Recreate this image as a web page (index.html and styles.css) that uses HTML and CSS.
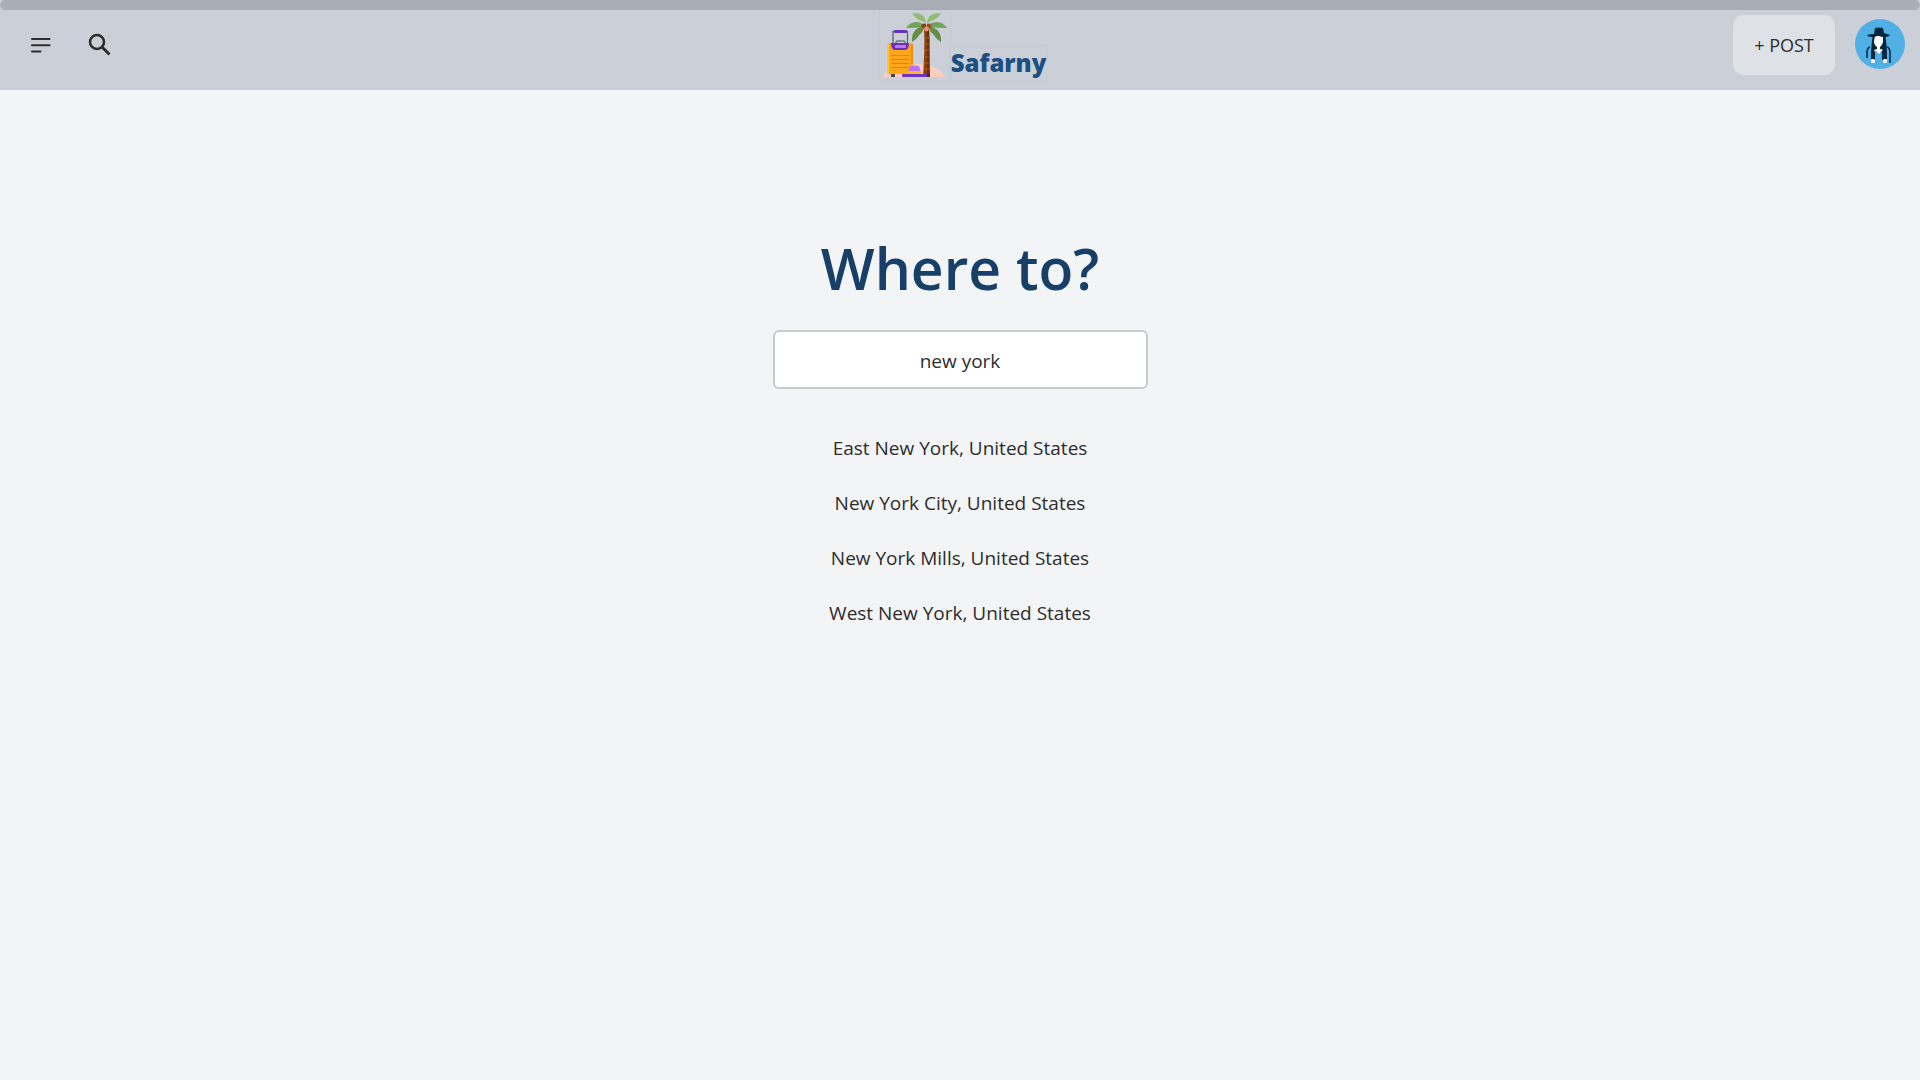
FILE: index.html
```html
<!DOCTYPE html>
<html lang="en">
<head>
<meta charset="utf-8">
<meta name="viewport" content="width=device-width, initial-scale=1">
<title>Safarny</title>
<link rel="stylesheet" href="styles.css">
</head>
<body>
<div class="progress"></div>
<header class="header">
  <nav class="tools">
    <button class="icon-button" type="button" aria-label="Menu">
      <svg width="20" height="16" viewBox="0 0 20 16" fill="none" stroke="#2d2d2d" stroke-width="2" stroke-linecap="round"><path d="M1 2h17.500M1 8.200h17.500M1 14.500h8.500"/></svg>
    </button>
    <button class="icon-button" type="button" aria-label="Search">
      <svg width="24" height="24" viewBox="0 0 24 24" fill="none" stroke="#2d2d2d"><circle cx="9" cy="9" r="7" stroke-width="2.600"/><path d="M14 14l7.500 7.500" stroke-width="3"/></svg>
    </button>
  </nav>
  <a class="brand" href="#">
    <svg class="brand-mark" width="70" height="70" viewBox="0 0 70 70" aria-hidden="true">
      <path d="M3 67c2-6 12-9 24-12 14-3 33 1 38 12z" fill="#fdcfc0"/>
      <path d="M44 17h5c1 17 0 34 1 50h-7c1-17 2-34 1-50z" fill="#8b3f0b"/>
      <path d="M47 18h2c1 17 0 34 1 49h-3z" fill="#6f2e08"/>
      <path d="M44 28h5M44 34h5M44 40h5M44 47h5M44 53h6M44 59h6" stroke="#a55b27"/>
      <path d="M46 17Q36 18 26 18Q30 12 36 12Q42 12 46 17z" fill="#70a456"/>
      <path d="M46 17Q57 18 67 18Q63 12 57 12Q51 12 46 17z" fill="#70a456"/>
      <path d="M46 14Q46 7 41 4.500Q37 2.500 32 3.500Q35 8 39 10q5 1 7 4z" fill="#91bd72"/>
      <path d="M47 14Q47 7 52 4.500Q56 2.500 61 3.500Q58 8 54 10q-5 1-7 4z" fill="#91bd72"/>
      <path d="M43 16Q31 19 32 32q5-3 8-8 4-3 4-8z" fill="#628e46"/>
      <path d="M49 16Q62 19 61 32q-5-3-8-8-4-3-4-8z" fill="#628e46"/>
      <circle cx="44" cy="16" r="2.400" fill="#8b3f0b"/><circle cx="49" cy="16" r="2.400" fill="#a24b20"/><circle cx="46.500" cy="19" r="2.400" fill="#e99679"/>
      <path d="M13 34V21.500h14.500V34" fill="none" stroke="#62646e" stroke-width="1.300"/>
      <rect x="14" y="20" width="13" height="3" rx="1" fill="#6930be"/>
      <path d="M16 33v-1q0-1 1-1h7q1 0 1 1v1" fill="none" stroke="#454550"/>
      <rect x="11" y="63" width="4" height="4" fill="#45454c"/>
      <rect x="7" y="33" width="26" height="31" rx="1.500" fill="#ffa719"/>
      <path d="M7 34h2v30H8q-1 0-1-1z" fill="#ffc23c"/>
      <path d="M31 34h2v20h-2z" fill="#ef8d12"/>
      <path d="M11 45.500h18M11 49.500h18M11 53.500h18M11 57.500h18" stroke="#ed7d0d"/>
      <path d="M11 33h18q0 7-4 7H15q-4 0-4-7z" fill="#6930be"/>
      <rect x="15" y="35" width="11" height="3" rx="1" fill="#b87bf0"/>
      <path d="M28 62l2-6q5-1 9 0l2 6z" fill="#b873ef"/>
      <path d="M28 61h13v3H28z" fill="#ffb22d"/>
      <rect x="22" y="64" width="28" height="3" rx="1" fill="#7132c6"/>
      <path d="M47 64h3v3h-3z" fill="#5e2315"/>
    </svg>
    <span class="brand-name">Safarny</span>
  </a>
  <div class="account">
    <button class="post" type="button">+ POST</button>
    <button class="avatar" type="button" aria-label="Profile">
      <svg width="50" height="50" viewBox="0 0 50 50" aria-hidden="true">
        <circle cx="25" cy="25" r="25" fill="#50afe5"/>
        <path d="M18 15q-2 10-2 25l4 1V31h7v10l5-1q0-15-2-25z" fill="#06263b"/>
        <path d="M15 28q-3 1-3 5v6M32 28q3 1 3 5v11" fill="none" stroke="#06263b" stroke-width="1.500"/>
        <path d="M20 17h8v6q-1 4-3 5v2l3 1-4 4q-4-1-5-4l3-1v-2q-3-2-3-6z" fill="#fff"/>
        <path d="M20 31l4 4 3-4v10h-7z" fill="#50afe5"/>
        <path d="M21 30l3 5 3-5z" fill="#fff"/>
        <path d="M19 15l1-6q4-1 8 0l1 5 6 2q-1 2-7 2-3 0-5-2-2 2-4 2-6 0-7-2 3-1 7-1z" fill="#06263b"/>
        <rect x="16" y="40" width="4" height="4" rx="1.500" fill="#fff"/><rect x="28" y="40" width="4" height="4" rx="1.500" fill="#fff"/>
      </svg>
    </button>
  </div>
</header>
<main class="search">
  <h1 class="title"><label for="destination">Where to?</label></h1>
  <input class="field" id="destination" type="text" value="new york" autocomplete="off">
  <ul class="results">
    <li><a class="result" href="#">East New York, United States</a></li>
    <li><a class="result" href="#">New York City, United States</a></li>
    <li><a class="result" href="#">New York Mills, United States</a></li>
    <li><a class="result" href="#">West New York, United States</a></li>
  </ul>
</main>
</body>
</html>
```
FILE: styles.css
```css
* { box-sizing: border-box; }

body {
  margin: 0;
  background: #f3f4f6;
  color: #2d2d2d;
  font-family: "Open Sans", "Noto Sans", sans-serif;
}

button {
  padding: 0;
  border: 0;
  background: none;
  color: inherit;
  font: inherit;
  cursor: pointer;
}

svg { display: block; }

.progress {
  height: 10px;
  border-radius: 5px;
  background: #a9adb6;
  box-shadow: 0 0 0 5px #cbcfd8;
}

.header {
  position: relative;
  display: grid;
  grid-template-columns: 1fr auto 1fr;
  align-items: start;
  height: 80px;
  background: #cbcfd8;
}

.tools {
  display: flex;
  align-items: center;
  gap: 37px;
  padding: 23px 0 0 31px;
}

.brand {
  display: flex;
  align-items: flex-end;
  padding-left: 6px;
  color: #1c4f82;
  text-decoration: none;
}

.brand-mark,
.brand-name {
  box-shadow: 0 0 2px rgba(0, 0, 0, 0.06);
}

.brand-name {
  padding-left: 1px;
  font-size: 24px;
  font-weight: 800;
  line-height: 34px;
}

.account {
  display: flex;
  justify-content: flex-end;
  align-items: center;
  gap: 20px;
  padding: 5px 15px 0 0;
}

.post {
  width: 102px;
  height: 60px;
  border-radius: 10px;
  background: #dee1e6;
  font-size: 18px;
}

.avatar { border-radius: 50%; margin-bottom: 2px; }

.search {
  display: flex;
  flex-direction: column;
  align-items: center;
  padding: 138px 20px 40px;
}

.title {
  margin: 0;
  color: #173f68;
  font-size: 57px;
  font-weight: 600;
  line-height: 80px;
}

.field {
  width: 100%;
  max-width: 375px;
  height: 59px;
  margin-top: 22px;
  padding: 2px 16px 0;
  border: 2px solid #c8c9cb;
  border-radius: 6px;
  background: #fff;
  color: inherit;
  font: inherit;
  font-size: 19px;
  text-align: center;
}

.results {
  margin: 32px 0 0;
  padding: 0;
  list-style: none;
  text-align: center;
}

.result {
  display: block;
  color: inherit;
  font-size: 19px;
  line-height: 55px;
  text-decoration: none;
}
```
